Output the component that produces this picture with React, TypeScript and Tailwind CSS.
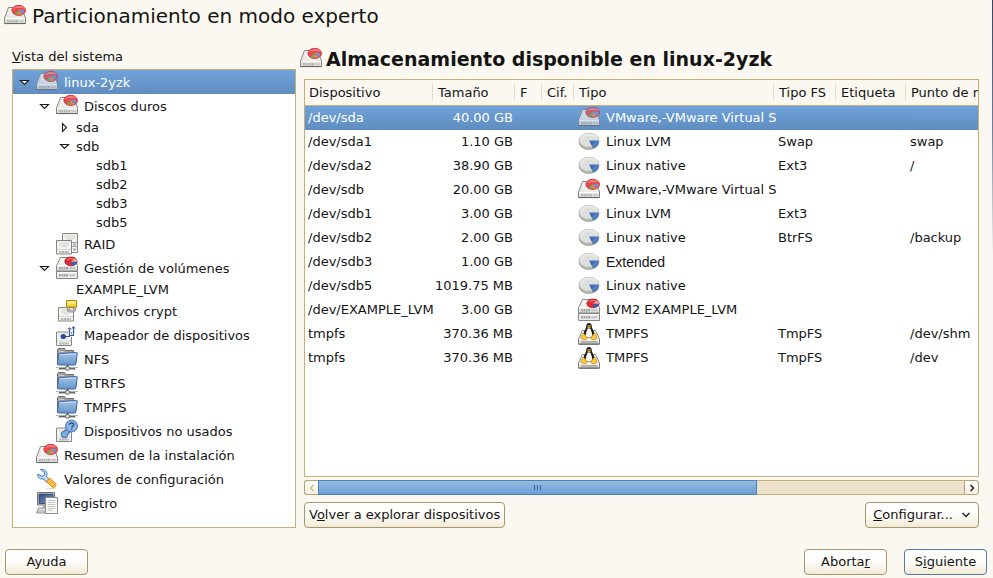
import type { ReactNode } from "react";

const EDGE = "#858583";

function Frame({ children }: { children: ReactNode }) {
  return (
    <svg viewBox="0 0 22 24" className="h-6 w-[22px] shrink-0" aria-hidden="true">
      {children}
    </svg>
  );
}

function Defs() {
  return (
    <svg className="absolute h-0 w-0" aria-hidden="true">
      <defs>
        <linearGradient id="metal" x1="0" y1="0" x2="0" y2="1">
          <stop offset="0" stopColor="#fbfbfa" />
          <stop offset="1" stopColor="#dededc" />
        </linearGradient>
        <linearGradient id="platter" x1="0" y1="0" x2="1" y2="1">
          <stop offset="0" stopColor="#e4e4e1" />
          <stop offset="1" stopColor="#d2d2ce" />
        </linearGradient>
        <linearGradient id="folder" x1="0" y1="0" x2="0" y2="1">
          <stop offset="0" stopColor="#a3c3e6" />
          <stop offset="1" stopColor="#6796cb" />
        </linearGradient>
        <linearGradient id="screen" x1="0" y1="0" x2="1" y2="1">
          <stop offset="0" stopColor="#2f4a80" />
          <stop offset="1" stopColor="#8098c4" />
        </linearGradient>
      </defs>
    </svg>
  );
}

function DiskIcon({ dim = false }: { dim?: boolean }) {
  return (
    <Frame>
      <g opacity={dim ? 0.72 : 1}>
        <path d="M4.500 3.500h13l4 10.500v5.500H.5V14z" fill="url(#metal)" stroke={EDGE} strokeLinejoin="round" />
        <path d="M3 12.500l2.300-7h8" fill="none" stroke="#e2e2e0" />
        <path d="M1 14h20v5H1z" fill="#e3e3e1" />
        <path d="M1 14.500h20" stroke="#fff" />
        <path d="M3 16h11v2.500H3z" fill="#b5b5b3" />
        <path d="M5.500 16v2.500M7.500 16v2.500M9.500 16v2.500M11.500 16v2.500" stroke="#cfcfcd" />
        <path d="M15 17.300h5" stroke="#c9c9c7" strokeWidth="2" />
        <path d="M.5 19.600h21" stroke="#666664" />
        <ellipse cx="14.700" cy="6.400" rx="6.800" ry="5.100" fill="#f0464c" stroke="#d4222e" strokeWidth=".8" />
        <path d="M9 5c1.500-3.600 9.500-4.200 11.500-.5-3.500-1-8-.8-11.500.5z" fill="#f98583" />
        <path d="M14.500 4.500v6.300c-2 0-3.800-.5-4.900-1.600z" fill="#c6584a" />
        <path d="M14.500 6v4.800c-1.500 0-2.900-.4-3.800-1z" fill="#6fae4c" />
        <path d="M14.500 6l3.500 4.200c-1 .5-2.200.7-3.500.6z" fill="#e79045" />
        <path d="M14.500 5.600l5.800.3c.1 1.800-.8 3.300-2.300 4.200z" fill="#7193cb" />
      </g>
    </Frame>
  );
}

function PartitionIcon() {
  return (
    <Frame>
      <ellipse cx="11" cy="12.300" rx="10.300" ry="7.400" fill="#8f8f8b" />
      <ellipse cx="11" cy="11.700" rx="9.900" ry="7" fill="#c6c6c2" />
      <ellipse cx="11" cy="10.300" rx="9.900" ry="7" fill="#dfdfdb" stroke="#adada9" strokeWidth=".7" />
      <path d="M3 8.500c2.500-4 10.500-5.500 15-1.500" fill="none" stroke="#ebebe8" strokeWidth="2" />
      <path d="M11 10.500h9.800c0 3.500-2.300 6.500-6 7.500z" fill="#3b70b8" />
      <path d="M14.300 15.800c2.400-.8 4-2.300 4.500-4.200" fill="none" stroke="#6797d3" strokeWidth="1.200" />
    </Frame>
  );
}

function LvmIcon() {
  return (
    <Frame>
      <path d="M4.500 1.500h14l3 8.500v5H.5v-5z" fill="url(#metal)" stroke={EDGE} strokeLinejoin="round" />
      <path d="M.5 15.500h21v7H.5z" fill="#ececea" stroke={EDGE} strokeLinejoin="round" />
      <path d="M1 9.500h20M1 16.500h20" stroke="#fff" />
      <path d="M3 11h9v2.500H3zM3 18h9v2.500H3z" fill="#a5a5a3" />
      <path d="M5.500 11v2.500M7.500 11v2.500M9.500 11v2.500M5.500 18v2.500M7.500 18v2.500M9.500 18v2.500" stroke="#cdcdcb" />
      <path d="M13 12.300h6.500M13 19.300h6.500" stroke="#c4c4c2" strokeWidth="2" />
      <ellipse cx="15" cy="5.400" rx="6.200" ry="4.400" fill="#e02a35" stroke="#b3121e" strokeWidth=".7" />
      <path d="M10.300 4.300c1.500-2.800 7-3 8.700-1.300-3 0-6 .3-8.700 1.300z" fill="#f3797b" />
      <path d="M14.800 5.600l6.400.2c-.3 2.300-2.700 3.900-5.200 4z" fill="#3462a8" />
      <path d="M14.800 5.600l4-3.200c1.600.8 2.500 1.900 2.400 3.400z" fill="#f0a9a0" />
    </Frame>
  );
}

function SmallDrive({ x, y }: { x: number; y: number }) {
  return (
    <g transform={`translate(${x} ${y})`}>
      <path d="M.5.500h15v13.500H.5z" fill="#f4f4f2" stroke={EDGE} strokeLinejoin="round" />
      <path d="M2 1.500c.5 8 11.500 8 12 0z" fill="url(#platter)" opacity=".7" />
      <path d="M1 9.500h14" stroke="#d6d6d4" />
      <path d="M3 12h10" stroke="#b4b4b2" strokeWidth="2" />
      <path d="M5.500 11v2M8.500 11v2M11.500 11v2" stroke="#d6d6d4" />
    </g>
  );
}

function RaidIcon() {
  return (
    <Frame>
      <path d="M6.500 1.500h15v19h-15z" fill="#f4f4f2" stroke={EDGE} strokeLinejoin="round" />
      <path d="M8 2.500c.5 8 11.500 8 12 0z" fill="url(#platter)" opacity=".7" />
      <path d="M8 10.500h13M8 14.500h13" stroke="#a0a09e" />
      <path d="M17 12.500h3M17 17.500h3" stroke="#aaaaa8" strokeWidth="2" />
      <SmallDrive x={0} y={8} />
    </Frame>
  );
}

function CryptIcon() {
  return (
    <Frame>
      <SmallDrive x={2} y={8} />
      <path d="M12 8v1.500c0 3.600 7 3.600 7 0V8" fill="none" stroke="#8d8d8b" strokeWidth="2.600" />
      <path d="M12 8v1.500c0 3.600 7 3.600 7 0V8" fill="none" stroke="#d8d8d6" />
      <path d="M10.500 1.500h10v6.500h-10z" fill="#f2da3c" stroke="#a88c10" strokeLinejoin="round" />
      <path d="M11.500 2.500h8v2h-8z" fill="#fbf095" />
    </Frame>
  );
}

function MapperIcon() {
  return (
    <Frame>
      <SmallDrive x={0} y={8.500} />
      <path d="M7 13.500h6.500V5M13 12.500h4.500V4" fill="none" stroke="#fff" strokeWidth="2.600" />
      <path d="M7 13.500h6.500V5.500M13.500 12.500h4V4" fill="none" stroke="#30589a" strokeWidth="1.200" />
      <path d="M12 6.500l1.500-2 1.500 2M16 5.500l1.500-2 1.500 2" fill="none" stroke="#30589a" />
      <circle cx="7.300" cy="13.500" r="2.600" fill="#274d92" />
    </Frame>
  );
}

function NetFolderIcon() {
  return (
    <Frame>
      <path d="M1.500 18V3l1-1.500h6l1 2h8V8" fill="#a2a2a0" stroke="#6f6f6d" strokeLinejoin="round" />
      <path d="M3 4.500h5M3 6.500h13" stroke="#c9c9c7" />
      <path d="M3.500 6.500l17-1c.6 0 .8.4.8.8l-1.500 10.900c0 .5-.4.800-.9.800H3.500c-1 0-2-.5-2-1.500l1-9c0-.6.4-1 1-1z" fill="url(#folder)" stroke="#34649f" />
      <path d="M4 7.700l16-.9" stroke="#c6dcf4" />
      <path d="M0 20.500h22M2 22.300h18" stroke="#b4b4b2" />
      <path d="M3 21.500h16" stroke="#5f5f5d" />
      <path d="M11.500 18v2" stroke="#666" strokeWidth="2" />
      <circle cx="11.500" cy="21.300" r="2" fill="#deded9" stroke="#646462" />
    </Frame>
  );
}

function UnusedIcon() {
  return (
    <Frame>
      <SmallDrive x={0} y={8.500} />
      <path d="M8.500 15.500l5.500-6" stroke="#3a6cb0" strokeWidth="5.600" strokeLinecap="round" />
      <circle cx="8.500" cy="15.500" r="3.300" fill="#7faadd" stroke="#3a6cb0" />
      <path d="M9 15l5-5.500" stroke="#7faadd" strokeWidth="3.600" strokeLinecap="round" />
      <circle cx="15.500" cy="7" r="5.900" fill="#8db4e2" stroke="#3a6cb0" />
      <path d="M13.500 5.700c.2-2.300 4.200-2.300 4.200.1 0 1.500-2 1.500-2 3" fill="none" stroke="#244d8c" strokeWidth="1.300" />
      <path d="M15 9.700h1.400v1.300H15z" fill="#244d8c" />
    </Frame>
  );
}

function ToolsIcon() {
  return (
    <Frame>
      <path d="M4.500 2.500l3.800 2.900.2 2.400-2.300 1.600L1.900 7C.8 9.900 3.600 12.700 7 11.800l4.200 4 2.700-2.700-3.400-3.700C12.500 5.500 8.500 1 4.500 2.500z" fill="#b9d3f0" stroke="#4a7fc1" strokeLinejoin="round" />
      <path d="M9 9.500l3.500 4" stroke="#e7f1fb" />
      <path d="M10.300 14.300l3.400-3.300 5.600 5.300c2.200 2.200-1.200 5.800-3.700 3.500z" fill="#fbb73c" stroke="#e58a10" strokeLinejoin="round" />
      <path d="M12.800 15.500l1.900-2M15.200 17.900l2.100-2.200" stroke="#fde09a" />
      <ellipse cx="15" cy="21.500" rx="5" ry=".7" fill="#dad7d0" />
    </Frame>
  );
}

function LogIcon() {
  return (
    <Frame>
      <path d="M1.500 1.500h17V14h-17z" fill="#deded9" stroke="#70706e" strokeLinejoin="round" />
      <path d="M3 3h14v9.500H3z" fill="url(#screen)" stroke="#2d4068" strokeWidth=".8" />
      <path d="M7 14.500h5v2H7z" fill="#a0a09e" />
      <path d="M2.500 17h12v2.500l1 2.500H.5z" fill="#e2e2e0" stroke="#8d8d8b" strokeLinejoin="round" />
      <path d="M2 20h7" stroke="#a8a8a6" />
      <path d="M9.500 6.500h12v16h-12z" fill="#fafaf8" stroke="#8d8d8b" />
      <path d="M11.500 9.500h8M11.500 11.500h8M11.500 13.500h8M11.500 15.500h8M11.500 17.500h8M11.500 19.500h5" stroke="#c6c6c4" />
    </Frame>
  );
}

function TuxIcon() {
  return (
    <Frame>
      <path d="M4.500 8.500h13l4 8.500v5H.5v-5z" fill="url(#metal)" stroke={EDGE} strokeLinejoin="round" />
      <path d="M1 17.500h20" stroke="#fff" />
      <path d="M3 20h16" stroke="#b1b1af" strokeWidth="2" />
      <path d="M.5 22.200h21" stroke="#5c5c5a" />
      <path d="M8.300 3.700c0-3.500 5.400-3.500 5.400 0 0 3.300 3.300 6 3 9.800-.3 3-11.100 3-11.400 0-.3-3.800 3-6.500 3-9.800z" fill="#161616" />
      <path d="M9.500 6.500h3c.5 2.500 2 4.500 1.800 7-.3 2.700-6.300 2.700-6.600 0-.2-2.500 1.300-4.500 1.800-7z" fill="#f6f6f4" />
      <path d="M9 5l2-1 2 1-2 1.700z" fill="#f2b21a" />
      <path d="M9.700 3.500h.8M11.700 3.500h.8" stroke="#fff" />
      <path d="M5.300 11l3.700 4.500c.7 2-1.500 2.700-5 1.700-1.400-.4-.3-1.700-.5-3-.2-.9.800-.9 1.800-3.200zM16.700 11L13 15.500c-.7 2 1.500 2.700 5 1.700 1.400-.4.3-1.700.5-3 .2-.9-.8-.9-1.800-3.200z" fill="#fbcb3a" stroke="#c48a10" strokeWidth=".7" />
    </Frame>
  );
}

type Node = { label: string; level: number; icon?: ReactNode; open?: boolean; selected?: boolean };

const nodes: Node[] = [
  { label: "linux-2yzk", level: 0, icon: <DiskIcon dim />, open: true, selected: true },
  { label: "Discos duros", level: 1, icon: <DiskIcon />, open: true },
  { label: "sda", level: 2, open: false },
  { label: "sdb", level: 2, open: true },
  { label: "sdb1", level: 3 },
  { label: "sdb2", level: 3 },
  { label: "sdb3", level: 3 },
  { label: "sdb5", level: 3 },
  { label: "RAID", level: 1, icon: <RaidIcon /> },
  { label: "Gestión de volúmenes", level: 1, icon: <LvmIcon />, open: true },
  { label: "EXAMPLE_LVM", level: 2 },
  { label: "Archivos crypt", level: 1, icon: <CryptIcon /> },
  { label: "Mapeador de dispositivos", level: 1, icon: <MapperIcon /> },
  { label: "NFS", level: 1, icon: <NetFolderIcon /> },
  { label: "BTRFS", level: 1, icon: <NetFolderIcon /> },
  { label: "TMPFS", level: 1, icon: <NetFolderIcon /> },
  { label: "Dispositivos no usados", level: 1, icon: <UnusedIcon /> },
  { label: "Resumen de la instalación", level: 0, icon: <DiskIcon /> },
  { label: "Valores de configuración", level: 0, icon: <ToolsIcon /> },
  { label: "Registro", level: 0, icon: <LogIcon /> },
];

const indents = ["pl-1", "pl-6", "pl-11", "pl-16"];

function TreeRow({ node }: { node: Node }) {
  const { label, level, icon, open, selected } = node;
  return (
    <li
      role="treeitem"
      aria-level={level + 1}
      aria-expanded={open}
      aria-selected={!!selected}
      className={`flex items-center ${indents[level]} ${icon ? "h-6" : "h-[19px]"} ${
        selected ? "bg-linear-to-b from-[#6fa3da] to-[#608dc0] text-white" : ""
      }`}
    >
      {open === undefined ? (
        <span className="w-[19px] shrink-0" />
      ) : (
        <button type="button" aria-label={`${open ? "Contraer" : "Expandir"} ${label}`} className="flex w-[19px] shrink-0 items-center pl-[2px]">
          <svg viewBox="0 0 11 11" className="h-[11px] w-[11px]" aria-hidden="true">
            <path
              d={open ? "M1.500 3.500h8L5.500 7.500z" : "M3.500 1.500v8L7.500 5.500z"}
              fill="#fff"
              stroke="#1c1c1c"
              strokeWidth="1.100"
            />
          </svg>
        </button>
      )}
      {icon}
      <span className={icon ? "pt-[2px] pl-[6px]" : ""}>{label}</span>
    </li>
  );
}

const disc = <PartitionIcon />;
const devices = [
  { dev: "/dev/sda", size: "40.00 GB", icon: <DiskIcon dim />, type: "VMware,-VMware Virtual S", fs: "", mount: "", selected: true },
  { dev: "/dev/sda1", size: "1.10 GB", icon: disc, type: "Linux LVM", fs: "Swap", mount: "swap" },
  { dev: "/dev/sda2", size: "38.90 GB", icon: disc, type: "Linux native", fs: "Ext3", mount: "/" },
  { dev: "/dev/sdb", size: "20.00 GB", icon: <DiskIcon />, type: "VMware,-VMware Virtual S", fs: "", mount: "" },
  { dev: "/dev/sdb1", size: "3.00 GB", icon: disc, type: "Linux LVM", fs: "Ext3", mount: "" },
  { dev: "/dev/sdb2", size: "2.00 GB", icon: disc, type: "Linux native", fs: "BtrFS", mount: "/backup" },
  { dev: "/dev/sdb3", size: "1.00 GB", icon: disc, type: "Extended", fs: "", mount: "", plain: true },
  { dev: "/dev/sdb5", size: "1019.75 MB", icon: disc, type: "Linux native", fs: "", mount: "" },
  { dev: "/dev/EXAMPLE_LVM", size: "3.00 GB", icon: <LvmIcon />, type: "LVM2 EXAMPLE_LVM", fs: "", mount: "" },
  { dev: "tmpfs", size: "370.36 MB", icon: <TuxIcon />, type: "TMPFS", fs: "TmpFS", mount: "/dev/shm" },
  { dev: "tmpfs", size: "370.36 MB", icon: <TuxIcon />, type: "TMPFS", fs: "TmpFS", mount: "/dev" },
];

const columns = [
  { name: "Dispositivo", width: "w-[128px]" },
  { name: "Tamaño", width: "w-[82px]" },
  { name: "F", width: "w-[27px]" },
  { name: "Cif.", width: "w-[32px]" },
  { name: "Tipo", width: "w-[200px]" },
  { name: "Tipo FS", width: "w-[62px]" },
  { name: "Etiqueta", width: "w-[70px]" },
  { name: "Punto de montaje", width: "" },
];

function DeviceTable() {
  return (
    <div className="min-h-0 flex-1 overflow-hidden border border-[#c4b078] bg-white">
      <table aria-label="Dispositivos" className="w-[148%] table-fixed border-collapse text-left whitespace-nowrap">
        <colgroup>
          {columns.map((c) => (
            <col key={c.name} className={c.width} />
          ))}
        </colgroup>
        <thead>
          <tr className="h-[25px] border-b border-[#c4b078] bg-[#fbf8f1]">
            {columns.map((c, i) => (
              <th key={c.name} scope="col" className="p-0 font-normal">
                <div className={`flex h-[18px] items-center pt-[2px] ${i === 0 ? "pl-1" : "pl-[5px]"} ${i < 7 ? "border-r border-[#e6dec6]" : ""}`}>
                  {c.name}
                </div>
              </th>
            ))}
          </tr>
        </thead>
        <tbody>
          {devices.map((d, i) => (
            <tr
              key={i}
              aria-selected={!!d.selected}
              className={`h-6 ${d.selected ? "bg-linear-to-b from-[#6fa3da] to-[#608dc0] text-white" : ""}`}
            >
              <td className="p-0 pl-[3px]">{d.dev}</td>
              <td className="p-0 pr-[2px] text-right">{d.size}</td>
              <td className="p-0" />
              <td className="p-0" />
              <td className="p-0 pl-1">
                <div className="flex h-6 items-center gap-[6px]">
                  {d.icon}
                  <span className={d.plain ? "font-['Liberation_Sans',sans-serif] text-sm leading-4" : ""}>{d.type}</span>
                </div>
              </td>
              <td className="p-0 pl-1">{d.fs}</td>
              <td className="p-0" />
              <td className="p-0 pl-1">{d.mount}</td>
            </tr>
          ))}
        </tbody>
      </table>
    </div>
  );
}

function ScrollBar() {
  return (
    <div className="mt-[3px] flex h-[15px]">
      <button type="button" disabled aria-label="Desplazar a la izquierda" className="flex w-[14px] items-center justify-center rounded-l-[3px] border border-r-0 border-[#b3a276] bg-linear-to-b from-white to-[#f5efdf]">
        <svg viewBox="0 0 8 8" className="h-2 w-2" aria-hidden="true">
          <path d="M5.500 1L2.500 4l3 3" fill="none" stroke="#d0bf93" strokeWidth="1.500" />
        </svg>
      </button>
      <div className="flex flex-1 bg-[#ede3cc]">
        <div className="flex w-[68%] items-center justify-center gap-[2px] border border-[#4f7fb5] bg-linear-to-b from-[#94bce6] to-[#6f9fd4]">
          <span className="h-[5px] w-px bg-[#3d6694]" />
          <span className="h-[5px] w-px bg-[#3d6694]" />
          <span className="h-[5px] w-px bg-[#3d6694]" />
        </div>
        <div className="flex-1 border-y border-[#c4b078]" />
      </div>
      <button type="button" aria-label="Desplazar a la derecha" className="flex w-[15px] items-center justify-center rounded-r-[3px] border border-[#b3a276] bg-linear-to-b from-white to-[#f5efdf]">
        <svg viewBox="0 0 8 8" className="h-2 w-2" aria-hidden="true">
          <path d="M2.500 1l3 3-3 3" fill="none" stroke="#222" strokeWidth="1.500" />
        </svg>
      </button>
    </div>
  );
}

function Button({ children, className }: { children: ReactNode; className: string }) {
  return (
    <button
      type="button"
      className={`flex h-[26px] items-center justify-center rounded-[4px] border bg-linear-to-b from-white via-[#fdfcf9] to-[#f2ead6] ${className}`}
    >
      {children}
    </button>
  );
}

export default function App() {
  return (
    <div className="flex min-h-screen bg-[#fbf8f1] font-['DejaVu_Sans',sans-serif] text-[13px] leading-4 text-[#141414]">
      <Defs />
      <div className="flex min-w-0 flex-1 flex-col">
        <header className="flex h-8 items-center gap-[6px] pl-1">
          <DiskIcon />
          <h1 className="text-[20px] leading-6">Particionamiento en modo experto</h1>
        </header>

        <main className="flex flex-1 gap-2 pr-[13px] pl-3">
          <section className="flex w-[284px] shrink-0 flex-col pt-[17px]">
            <h2 id="tree-label" className="mb-1">
              <u>V</u>ista del sistema
            </h2>
            <ul role="tree" aria-labelledby="tree-label" className="flex-1 border border-[#c4b078] bg-white">
              {nodes.map((n) => (
                <TreeRow key={n.label} node={n} />
              ))}
            </ul>
          </section>

          <section className="flex min-w-0 flex-1 flex-col pt-[15px]">
            <h2 className="mb-2 -ml-1 flex h-6 items-center gap-1 text-[19px] leading-6 font-bold">
              <DiskIcon />
              Almacenamiento disponible en linux-2yzk
            </h2>
            <DeviceTable />
            <ScrollBar />
            <div className="mt-[7px] flex justify-between">
              <Button className="border-[#a6976b] px-1">
                <span>
                  V<u>o</u>lver a explorar dispositivos
                </span>
              </Button>
              <Button className="gap-2 border-[#a6976b] px-[7px]">
                <span>
                  <u>C</u>onfigurar...
                </span>
                <svg viewBox="0 0 10 8" className="h-2 w-[10px]" aria-hidden="true">
                  <path d="M1.500 2L5 5.500 8.500 2" fill="none" stroke="#222" strokeWidth="1.500" />
                </svg>
              </Button>
            </div>
          </section>
        </main>

        <footer className="flex gap-[17px] pt-[21px] pr-[5px] pb-[3px] pl-[5px]">
          <Button className="mr-auto w-[83px] border-[#a6976b]">Ayuda</Button>
          <Button className="w-[83px] border-[#a6976b]">
            <span>
              Aborta<u>r</u>
            </span>
          </Button>
          <Button className="w-[83px] border-[#557aa6]">
            <span>
              S<u>i</u>guiente
            </span>
          </Button>
        </footer>
      </div>
      <div className="h-64 w-px bg-linear-to-b from-[#35455f] via-[#6d7f9b] to-[#fbf8f1]" />
    </div>
  );
}
